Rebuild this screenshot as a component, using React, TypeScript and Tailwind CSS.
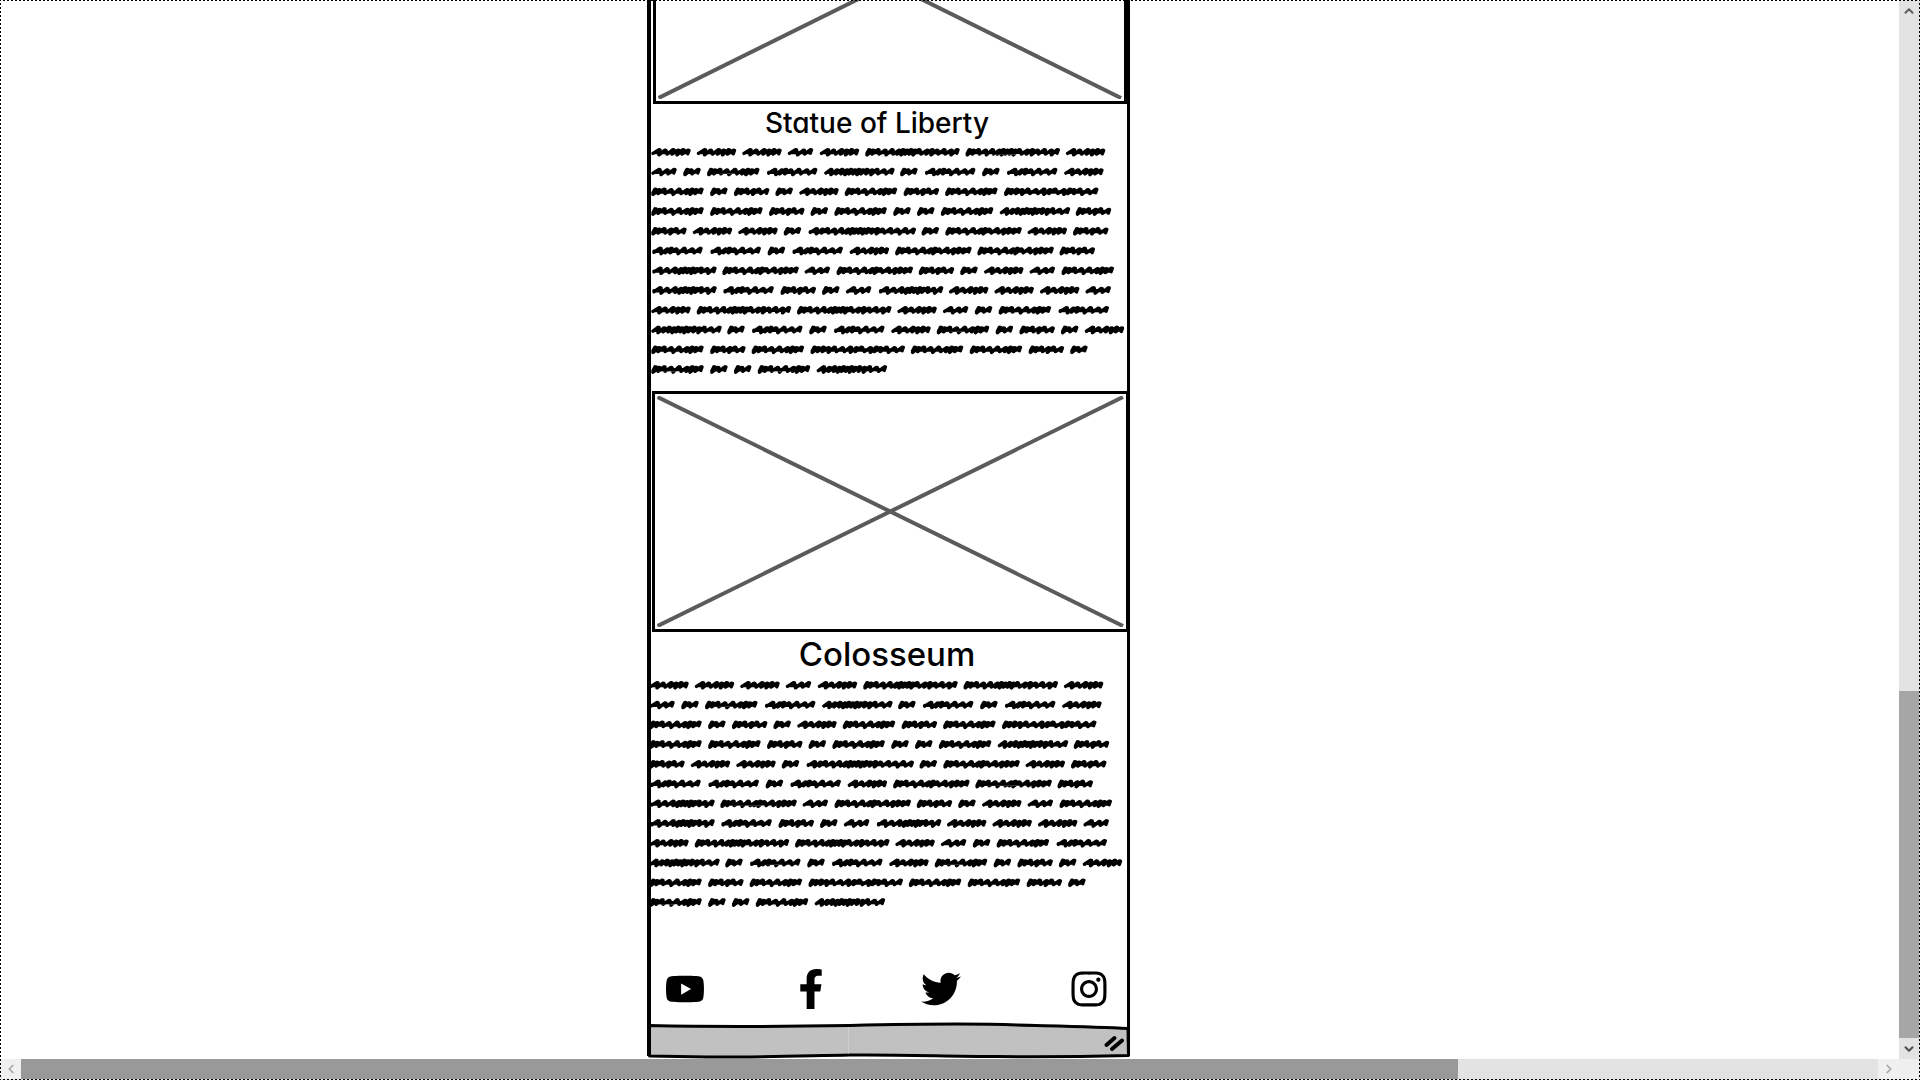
import { FaYoutube, FaFacebookF, FaTwitter, FaInstagram } from "react-icons/fa";
import { ChevronUp, ChevronDown, ChevronLeft, ChevronRight } from "lucide-react";

type Word = { advance: number; peaks: number[] };

const WORDS: Record<string, Word> = {
  A: { advance: 45.5, peaks: [9, 15, 23, 28, 33, 38] },
  B: { advance: 32, peaks: [9, 17, 24] },
  C: { advance: 100.3, peaks: [5, 9, 14, 21, 28, 35, 39, 43, 47, 51, 55, 63, 68, 73, 80, 87, 93] },
  D: { advance: 23.8, peaks: [5, 9, 16] },
  E: { advance: 58.9, peaks: [5, 9, 14, 21, 29, 37, 42, 46, 51] },
  F: { advance: 58.2, peaks: [10, 17, 21, 26, 34, 42, 50] },
  G: { advance: 76, peaks: [8, 14, 19, 24, 28, 32, 36, 40, 44, 49, 54, 61, 69] },
  H: { advance: 41.5, peaks: [5, 9, 14, 21, 26, 34] },
  I: { advance: 82.2, peaks: [5, 9, 14, 21, 29, 37, 41, 45, 53, 60, 65, 70, 75] },
  J: { advance: 71.1, peaks: [10, 17, 25, 31, 35, 39, 43, 47, 51, 57, 64] },
  K: { advance: 114, peaks: [10, 16, 21, 28, 35, 42, 46, 50, 54, 58, 62, 66, 71, 76, 84, 91, 99, 107] },
  L: { advance: 100.3, peaks: [5, 9, 14, 19, 25, 33, 41, 47, 52, 61, 67, 71, 77, 85, 93] },
};

const LINES = [
  "AAABACCA",
  "BDEFGDFDFA",
  "EDHDAEHEL",
  "EEHDEDDEGH",
  "HAADKDIAH",
  "FFDFAIIH",
  "JIBIHDABE",
  "JFHDBJAAAB",
  "ACCABDEF",
  "GDFDFAEDHDA",
  "EHELEEHD",
  "EDDEG",
];

const LINE_PITCH = 19.75;

function scribblePath(line: string, row: number): string {
  let x = 0;
  let d = "";
  const y = row * LINE_PITCH + 10;
  for (const key of line) {
    const { advance, peaks } = WORDS[key];
    const last = peaks[peaks.length - 1];
    peaks.forEach((p, i) => {
      const start = Math.max(2, p - 7);
      const low = i === 0 ? 1.4 : i % 3 === 1 ? 2.9 : 2.1;
      const high = i % 2 === 0 ? 2.4 : 1.8;
      d += `${i === 0 ? "M" : "L"}${(x + start).toFixed(1)} ${(y + low).toFixed(1)}`;
      d += `L${(x + p - 1).toFixed(1)} ${(y - high).toFixed(1)}l1 0.2`;
    });
    d += "l-1.2 3.4";
    d += `M${(x + 3).toFixed(1)} ${(y + 0.6).toFixed(1)}L${(x + last - 1).toFixed(1)} ${(y + 0.2).toFixed(1)}`;
    x += advance;
  }
  return d;
}

function Scribble() {
  return (
    <svg
      viewBox="0 0 474 237"
      className="block h-[237px] w-[474px] overflow-visible"
      fill="none"
      stroke="#000"
      strokeWidth="3.4"
      strokeLinecap="round"
      strokeLinejoin="round"
      aria-hidden="true"
    >
      {LINES.map((line, row) => (
        <path key={row} d={scribblePath(line, row)} />
      ))}
    </svg>
  );
}

function ImagePlaceholder({ className }: { className: string }) {
  return (
    <div className={`h-[241px] shrink-0 border-[3px] border-black p-0.5 ${className}`}>
      <svg viewBox="0 0 466 231" preserveAspectRatio="none" className="block h-full w-full" aria-hidden="true">
        <path d="M0.500 1L465 230M465 1L0.500 230" stroke="#5b5b5b" strokeWidth="4" fill="none" />
      </svg>
    </div>
  );
}

const HEADING = "text-center font-['Inter'] font-medium text-black [font-feature-settings:'cv11'] ";

function BottomBar() {
  return (
    <svg
      viewBox="0 0 483 39"
      preserveAspectRatio="none"
      className="block h-[39px] w-[483px] shrink-0"
      aria-hidden="true"
    >
      <path
        d="M2 5.500C70 7 140 6.500 203 5.500C270 4 330 3.500 370 5C410 6 450 6.500 481 8.500L481.500 35.500C440 36.500 400 37 350 36.500C290 36 250 34.500 203 35C150 36 100 37.500 60 37L2.500 36Z"
        fill="#c1c1c1"
        stroke="#000"
        strokeWidth="3"
        strokeLinejoin="round"
      />
      <path d="M2 0V36" stroke="#000" strokeWidth="4" />
      <path d="M481.500 0V35.500" stroke="#000" strokeWidth="3" />
      <path d="M201.500 7V33.500" stroke="#cfcfcf" strokeWidth="1" />
      <path d="M459.500 25L467.500 18M465 29L475 20.500" stroke="#000" strokeWidth="4" strokeLinecap="round" />
    </svg>
  );
}

const LINKS = [
  { label: "YouTube", Icon: FaYoutube },
  { label: "Facebook", Icon: FaFacebookF },
  { label: "Twitter", Icon: FaTwitter },
  { label: "Instagram", Icon: FaInstagram },
];

export default function App() {
  return (
    <div className="relative grid h-screen grid-cols-[1fr_21px] grid-rows-[1fr_21px] overflow-hidden bg-white">
      <div className="pointer-events-none absolute -inset-px z-10 border-2 border-dotted border-black" />

      <main className="flex min-h-0 flex-col justify-end overflow-hidden">
        <article className="ml-[647px] w-[483px] shrink-0">
          <div className="flex flex-col border-r-[3px] border-l-4 border-black">
            <ImagePlaceholder className="ml-0.5" />
            <h2 className={HEADING + "h-[38px] pr-6 text-[28px] leading-[38px]"}>Statue of Liberty</h2>
            <Scribble />
            <ImagePlaceholder className="mt-3 -mr-0.5 ml-px" />
            <h2 className={HEADING + "h-[43px] pr-1 text-[33px] leading-[45px]"}>Colosseum</h2>
            <div className="-ml-0.5">
              <Scribble />
            </div>
            <nav className="mt-[57px] mb-[11px] grid grid-cols-[126px_130px_148px_auto] pl-[14px]">
              {LINKS.map(({ label, Icon }) => (
                <a key={label} href="#" aria-label={label} className="block w-10 text-black">
                  <Icon size={40} />
                </a>
              ))}
            </nav>
          </div>
          <BottomBar />
        </article>
      </main>

      <div className="flex flex-col bg-[#e3e3e3] pr-px">
        <button aria-label="Scroll up" className="flex h-[21px] items-center justify-center text-[#606060]">
          <ChevronUp size={14} strokeWidth={3.5} />
        </button>
        <div className="flex-[671]" />
        <div className="flex-[347] bg-[#a6a6a6]" />
        <button aria-label="Scroll down" className="flex h-[21px] items-center justify-center text-[#505050]">
          <ChevronDown size={14} strokeWidth={3.5} />
        </button>
      </div>

      <div className="flex bg-[#e3e3e3] pb-px">
        <button aria-label="Scroll left" className="flex w-[21px] items-center justify-center bg-[#f0f0f0] text-[#a6a6a6]">
          <ChevronLeft size={14} strokeWidth={3} />
        </button>
        <div className="flex-[1437] bg-[#999999]" />
        <div className="flex-[420]" />
        <button aria-label="Scroll right" className="flex w-[21px] items-center justify-center bg-[#f0f0f0] text-[#a6a6a6]">
          <ChevronRight size={14} strokeWidth={3} />
        </button>
      </div>
      <div className="bg-[#efefef]" />
    </div>
  );
}
